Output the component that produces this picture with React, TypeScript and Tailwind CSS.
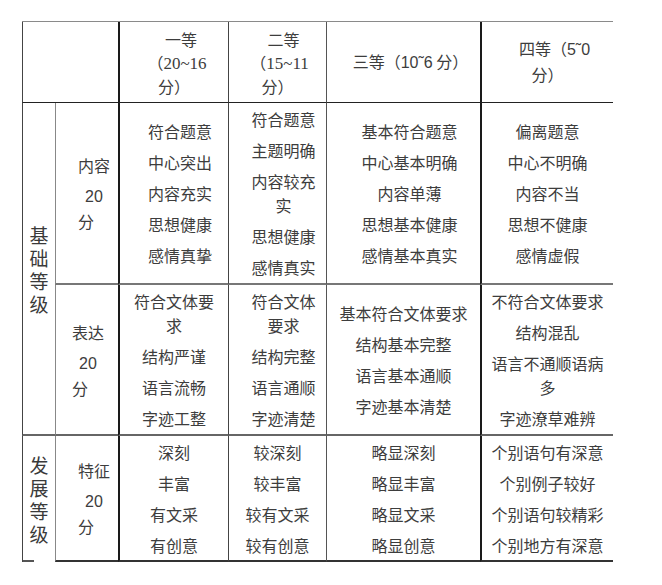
import React from 'react';

type P = string | string[];

function Lines({ items, shift }: { items: P[]; shift?: boolean }) {
  return (
    <div className={shift ? 'flex flex-col items-center gap-[7px] pl-[12px]' : 'flex flex-col items-center gap-[7px]'}>
      {items.map((it, i) => (
        <div key={i} className="text-center leading-[24px] whitespace-nowrap">
          {Array.isArray(it) ? it.map((l, j) => <div key={j}>{l}</div>) : it}
        </div>
      ))}
    </div>
  );
}

function Label({ name, pad }: { name: string; pad: 'a' | 'b' }) {
  return (
    <div className={pad === 'a' ? 'flex flex-col pl-[22px]' : 'flex flex-col pl-[16px]'}>
      <div className="leading-[24px]">{name}</div>
      <div className="mt-[8px] leading-[24px] pl-[7px] font-['Liberation_Sans',sans-serif]">20</div>
      <div className="leading-[24px]">分</div>
    </div>
  );
}

function Vert({ chars }: { chars: string[] }) {
  return (
    <div className="flex flex-col items-center text-[19px] leading-[23px] text-[#3a3a3a]">
      {chars.map((c, i) => (
        <div key={i}>{c}</div>
      ))}
    </div>
  );
}

const serif = "font-['Liberation_Serif','Noto_Sans_CJK_SC',serif]";

export default function App() {
  return (
    <div className="w-[662px] h-[585px] bg-white pt-[21px] pl-[22px] font-['Noto_Sans_CJK_SC',sans-serif] text-[16px] text-[#3d3d3d]">
      <div className="grid grid-cols-[33px_63px_110px_98px_154px_133px] grid-rows-[81px_182px_151px_126px] border-t border-t-[#8a8a8a] w-[591px]">
        {/* header */}
        <div className="col-span-2 border-l border-l-[#444] border-b border-b-[#222]" />
        <div className="border-l-2 border-l-[#1a1a1a] border-b border-b-[#222] flex items-center justify-center">
          <div className="flex flex-col items-center leading-[23px] pt-[1px]">
            <div className="pl-[14px]">一等</div>
            <div className="pl-[6px]">（<span className={serif + ' text-[17px]'}>20~16</span></div>
            <div>分）</div>
          </div>
        </div>
        <div className="border-l border-l-[#444] border-b border-b-[#222] flex items-center justify-center">
          <div className="flex flex-col items-center leading-[23px] pt-[1px]">
            <div className="pl-[12px]">二等</div>
            <div className="pl-[4px]">（<span className={serif + ' text-[17px]'}>15~11</span></div>
            <div>分）</div>
          </div>
        </div>
        <div className="border-l border-l-[#555] border-b border-b-[#222] flex items-center justify-center">
          <div className="pl-[14px] leading-[23px] whitespace-nowrap">
            三等（<span className="font-['Liberation_Sans',sans-serif]">10˜6</span> 分）
          </div>
        </div>
        <div className="border-l-2 border-l-[#1a1a1a] border-b border-b-[#222] flex items-center justify-center">
          <div className="flex flex-col items-center leading-[24px] pb-[2px]">
            <div className="pl-[14px]">
              四等（<span className="font-['Liberation_Sans',sans-serif]">5˜0</span>
            </div>
            <div>分）</div>
          </div>
        </div>

        {/* 基础等级 */}
        <div className="row-span-2 border-l border-l-[#444] border-b-2 border-b-[#666] flex items-center justify-center">
          <Vert chars={['基', '础', '等', '级']} />
        </div>

        {/* row 1: 内容 */}
        <div className="border-l border-l-[#888] border-b-2 border-b-[#777] flex items-center">
          <Label name="内容" pad="a" />
        </div>
        <div className="border-l-2 border-l-[#1a1a1a] border-b-2 border-b-[#777] flex items-center justify-center">
          <Lines shift items={['符合题意', '中心突出', '内容充实', '思想健康', '感情真挚']} />
        </div>
        <div className="border-l border-l-[#444] border-b-2 border-b-[#777] flex items-center justify-center">
          <Lines shift items={['符合题意', '主题明确', ['内容较充', '实'], '思想健康', '感情真实']} />
        </div>
        <div className="border-l border-l-[#555] border-b-2 border-b-[#777] flex items-center justify-center">
          <Lines shift items={['基本符合题意', '中心基本明确', '内容单薄', '思想基本健康', '感情基本真实']} />
        </div>
        <div className="border-l-2 border-l-[#1a1a1a] border-b-2 border-b-[#777] flex items-center justify-center">
          <Lines items={['偏离题意', '中心不明确', '内容不当', '思想不健康', '感情虚假']} />
        </div>

        {/* row 2: 表达 */}
        <div className="border-l border-l-[#888] border-b-2 border-b-[#666] flex items-center">
          <Label name="表达" pad="b" />
        </div>
        <div className="border-l-2 border-l-[#1a1a1a] border-b-2 border-b-[#666] flex items-center justify-center">
          <Lines items={[['符合文体要', '求'], '结构严谨', '语言流畅', '字迹工整']} />
        </div>
        <div className="border-l border-l-[#444] border-b-2 border-b-[#666] flex items-center justify-center">
          <Lines shift items={[['符合文体', '要求'], '结构完整', '语言通顺', '字迹清楚']} />
        </div>
        <div className="border-l border-l-[#555] border-b-2 border-b-[#666] flex items-center justify-center">
          <Lines items={['基本符合文体要求', '结构基本完整', '语言基本通顺', '字迹基本清楚']} />
        </div>
        <div className="border-l-2 border-l-[#1a1a1a] border-b-2 border-b-[#666] flex items-center justify-center">
          <Lines items={['不符合文体要求', '结构混乱', ['语言不通顺语病', '多'], '字迹潦草难辨']} />
        </div>

        {/* row 3: 发展等级 / 特征 */}
        <div className="relative border-l border-l-[#444] flex items-center justify-center">
          <Vert chars={['发', '展', '等', '级']} />
          <div className="absolute left-0 bottom-0 w-[11px] h-[2px] bg-[#555]" />
        </div>
        <div className="border-l border-l-[#888] border-b-2 border-b-[#333] flex items-center">
          <Label name="特征" pad="a" />
        </div>
        <div className="border-l-2 border-l-[#1a1a1a] border-b-2 border-b-[#333] flex items-center justify-center">
          <Lines items={['深刻', '丰富', '有文采', '有创意']} />
        </div>
        <div className="border-l border-l-[#444] border-b-2 border-b-[#333] flex items-center justify-center">
          <Lines items={['较深刻', '较丰富', '较有文采', '较有创意']} />
        </div>
        <div className="border-l border-l-[#555] border-b-2 border-b-[#333] flex items-center justify-center">
          <Lines items={['略显深刻', '略显丰富', '略显文采', '略显创意']} />
        </div>
        <div className="border-l-2 border-l-[#1a1a1a] border-b-2 border-b-[#333] flex items-center justify-center">
          <Lines items={['个别语句有深意', '个别例子较好', '个别语句较精彩', '个别地方有深意']} />
        </div>
      </div>
    </div>
  );
}
